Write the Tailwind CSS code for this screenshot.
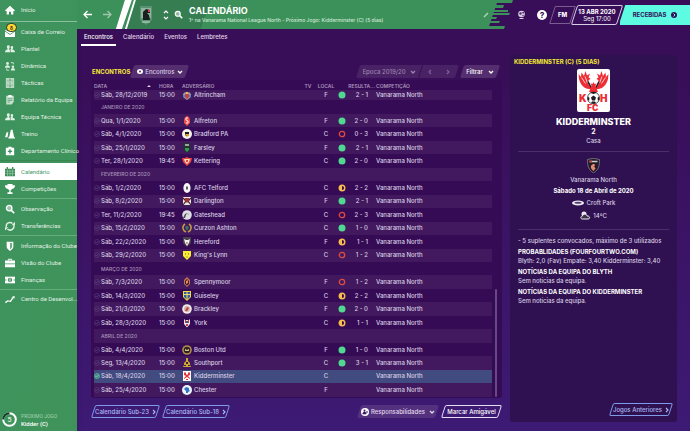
<!DOCTYPE html>
<html lang="pt">
	<head>
		<meta charset="UTF-8" />
		<meta name="viewport" content="width=device-width, initial-scale=1.0" />
		<title>Calendário</title>
		<script src="https://cdn.jsdelivr.net/npm/@tailwindcss/browser@4"></script>
	</head>
	<body class="font-[Inter,'Liberation_Sans',sans-serif] text-[6px] leading-[8px] font-medium text-[#d9cfe3]">
		<!-- Shared shapes -->
		<svg class="hidden">
			<symbol id="chevron-down" viewBox="0 0 6 4"><path d="M1 1l2 2 2-2" fill="none" stroke="currentColor" stroke-width="1.3" /></symbol>
			<symbol id="chevron-right" viewBox="0 0 4 6"><path d="M1 1l2 2-2 2" fill="none" stroke="currentColor" stroke-width="1.1" /></symbol>
			<symbol id="chevron-left" viewBox="0 0 4 6"><path d="M3 1L1 3l2 2" fill="none" stroke="currentColor" stroke-width="1.1" /></symbol>
			<symbol id="search" viewBox="0 0 12 12"><circle cx="5" cy="5" r="3.3" fill="currentColor" fill-opacity=".45" stroke="currentColor" stroke-width="1.6" /><path d="M7.5 7.5L11 11" stroke="currentColor" stroke-width="2" /></symbol>
			<symbol id="people" viewBox="0 0 12 12"><path d="M0 10c0-2 1-3 3-3.4V5.5C1.6 4 2 1.5 4 1.5S6.4 4 5 5.5v1c1 .3 1.5.9 1.7 3.5zM7.3 10c0-1.5-.3-2.5-1.1-3.3L7.5 6C6.3 4.3 6.5 2.5 8.3 2.5s2 2 .9 3.5v.8C11 7.2 12 8 12 10z" fill="currentColor" /></symbol>
			<symbol id="won" viewBox="0 0 8 8"><circle cx="4" cy="4" r="3.5" fill="#50d890" /></symbol>
			<symbol id="lost" viewBox="0 0 8 8"><circle cx="4" cy="4" r="2.7" fill="none" stroke="#dc4b3e" stroke-width="1.3" /></symbol>
			<symbol id="drawn" viewBox="0 0 8 8"><circle cx="4" cy="4" r="2.8" fill="#35103f" stroke="#f8bd4f" stroke-width="1.4" /><path d="M4 1a3 3 0 0 0 0 6z" fill="#f8bd4f" /></symbol>

			<!-- Club crests -->
			<symbol id="altrincham" viewBox="0 0 10 10"><path d="M1 4l2-2 2 1 2-1 2 2v3L5 10 1 7z" fill="#9b9aa9" /><path d="M3 4h4v3L5 9 3 7z" fill="#c34342" /><path d="M1 5h2v2H1zM7 5h2v2H7z" fill="#557fcf" /><path d="M4 2h2v2H4z" fill="#e5bb58" /></symbol>
			<symbol id="alfreton" viewBox="0 0 10 10"><path d="M3 1l2-1 2 1 1 3v3L5 10 2 7V4z" fill="#ee4d49" /><path d="M6 2H4v2l2 1v2H4" fill="none" stroke="#fff" stroke-width=".9" /></symbol>
			<symbol id="bradford" viewBox="0 0 10 10"><circle cx="5" cy="5" r="5" fill="#f6f2ea" /><path d="M3 3h4v3L5 7.5 3 6z" fill="#1d1b23" /><path d="M3 5h4v1L5 7.5z" fill="#e4a42f" /></symbol>
			<symbol id="farsley" viewBox="0 0 10 10"><path d="M2 0h6v2l1 1-1 4-3 3-3-3-1-4 1-1z" fill="#22342c" /><path d="M3 1h4v2H3z" fill="#9ba5a3" /><path d="M3 5h4v2L5 9 3 7z" fill="#2d9b53" /></symbol>
			<symbol id="kettering" viewBox="0 0 10 10"><path d="M0 2l3 0 2-1 2 1 3 0-1 4-1 1-3 3-3-3-1-1z" fill="#e94445" /><path d="M2 3h6L7 6 5 8 3 6z" fill="#f6d9b3" /><path d="M4 4h2v2H4z" fill="#e94445" /></symbol>
			<symbol id="telford" viewBox="0 0 10 10"><ellipse cx="5" cy="5" rx="3.6" ry="5" fill="#f4f3f5" /><path d="M5 3l.8 1v2L5 7l-.8-1V4z" fill="#383440" /></symbol>
			<symbol id="darlington" viewBox="0 0 10 10"><path d="M1 1h8v8H1z" fill="#eee3df" /><path d="M1 2l3 3-3 4M9 2L6 5l3 4" fill="none" stroke="#2c2228" stroke-width="1.2" /><path d="M3 2h4v3L5 7 3 5z" fill="#a4323a" /></symbol>
			<symbol id="gateshead" viewBox="0 0 10 10"><circle cx="5" cy="5" r="4.8" fill="#dedde3" /><path d="M1 8l2-4 2-1-1 2-1 3z" fill="#4d4958" /><path d="M5 3l2 1-1 1z" fill="#8d8999" /></symbol>
			<symbol id="curzon" viewBox="0 0 10 10"><path d="M3 1C0 3 0 7 4 9M7 1c3 2 3 6-1 8" fill="none" stroke="#c59d43" stroke-width="1.6" /><path d="M3.5 3h3v3L5 7.5 3.5 6z" fill="#3c6f69" /></symbol>
			<symbol id="hereford" viewBox="0 0 10 10"><path d="M1 0h8v6L5 10 1 6z" fill="#46434c" /><path d="M2 2l2 1h2l2-1-1 4-2 3-2-3z" fill="#f4eeee" /><path d="M4 5h2v2H4z" fill="#c99a9b" /></symbol>
			<symbol id="kingslynn" viewBox="0 0 10 10"><path d="M1 1h8v5L5 10 1 6z" fill="#f8ee2f" /><path d="M3 3h1v2H3zM6 3h1v2H6zM4.5 6h1v2h-1z" fill="#aaa03b" /></symbol>
			<symbol id="spennymoor" viewBox="0 0 10 10"><path d="M5 0l3 3v4l-3 3-3-3V3z" fill="#c96f5a" /><path d="M5 2l2 2v3L5 8.5 3 7V4z" fill="#36222b" /><path d="M4 4l2-1v3L4 7z" fill="#e58d65" /></symbol>
			<symbol id="guiseley" viewBox="0 0 10 10"><path d="M1 0h8v6L5 10 1 6z" fill="#f3dc3e" /><path d="M2 1h6v5L5 8.5 2 6z" fill="#2e5b99" /><path d="M4.5 1h1v7h-1zM2 3h6v1H2z" fill="#e9e469" /></symbol>
			<symbol id="brackley" viewBox="0 0 10 10"><circle cx="5" cy="5" r="4.8" fill="#f1e9e8" /><circle cx="5" cy="5" r="3" fill="#d8b0ad" /><path d="M3 7l2-4 2 1-2 3z" fill="#b54546" /></symbol>
			<symbol id="york" viewBox="0 0 10 10"><path d="M2 1l1 1h4l1-1v5L5 9.5 2 6z" fill="#e6e4ee" /><path d="M3 2h1v3H3zM6 2h1v3H6zM4 6h2v2H4z" fill="#c83c4a" /><path d="M4 3h2v2H4z" fill="#4c5077" /></symbol>
			<symbol id="boston" viewBox="0 0 10 10"><circle cx="5" cy="5" r="4.8" fill="#b58d4a" /><circle cx="5" cy="5" r="3.2" fill="#2b2423" /><path d="M3 4l2 1 2-1v2H3z" fill="#d9c28e" /></symbol>
			<symbol id="southport" viewBox="0 0 10 10"><path d="M4 0h2v3l2 2v2l1 2H1l1-2V5l2-2z" fill="#d0a73a" /><path d="M4 4h2v2H4zM2 7h2v1H2zM6 7h2v1H6z" fill="#3c262b" /></symbol>
			<symbol id="chester" viewBox="0 0 10 10"><circle cx="5" cy="5" r="5" fill="#eef3fb" /><path d="M2 4l2-2 3 1v2l1 1-2 1v1H4V6z" fill="#2f73c4" /></symbol>
			<symbol id="kidderminster" viewBox="0 0 66 86">
				<rect width="66" height="86" rx="4" fill="#fff" />
				<path d="M29 39C19 43 8 35 4 20L3 10l5 6 1-9 5 7 3-10 3 9 6-4-3 8 4 2-4 4c-1 6 1 11 6 16zM37 39c10 4 21-4 25-19l1-10-5 6-1-9-5 7-3-10-3 9-6-4 3 8-4 2 4 4c1 6-1 11-6 16z" fill="#ee2d35" />
				<path d="M9 17l8 12M16 15l5 13M57 17l-8 12M50 15l-5 13" stroke="#fff" stroke-width="1.5" />
				<path d="M22 25l7 14M44 25l-7 14" stroke="#211c20" stroke-width="3" />
				<path d="M24 46l5-13-2-4 4 1 2-4 2 4 4-1-2 4 5 13-9 1z" fill="#ee2d35" />
				<circle cx="33" cy="58" r="12" fill="#fff" stroke="#211c20" stroke-width="1.5" />
				<path d="M33 53l5 4-2 6h-6l-2-6zM27 48l6 2 6-2-2-2h-8zM22 55l3 3-1 6-3-3zM44 55l-3 3 1 6 3-3zM28 68l2-3h6l2 3-5 2z" fill="#211c20" />
				<text x="4" y="66" font-size="20" font-weight="900" fill="#ee2d35">K</text>
				<text x="46" y="66" font-size="20" font-weight="900" fill="#ee2d35">H</text>
				<text x="20" y="83" font-size="17" font-weight="900" fill="#ee2d35">FC</text>
			</symbol>
			<symbol id="kidderminster-small" viewBox="0 0 10 10"><path d="M1 0h8v10H1z" fill="#fff" /><path d="M2 1l1 1 1-1v2l1 1 1-1V1l1 1 1-1v3L6 5l2 2v1L5 6 2 8V7l2-2-2-1zM4 8h2v1H4z" fill="#e2353b" /></symbol>
		</svg>

		<div class="flex min-h-screen bg-linear-to-b from-[#390e59] from-20% to-[#3d1a74]">
			<!-- Sidebar -->
			<nav class="flex w-[77px] shrink-0 flex-col bg-linear-to-br from-[#3e935e] to-[#3f935a] font-[Roboto,'Liberation_Sans',sans-serif] font-normal text-[#e0efe3] shadow-md">
				<div class="border-b border-white/40 pb-px">
					<a href="#" class="flex h-[20px] items-center gap-[6px] pl-[5px]">
						<svg class="size-[10px]" viewBox="0 0 12 12"><path d="M6 1L0 6.5l1.2 1L2 7v4.5h2.8V8h2.4v3.5H10V7l.8.5 1.2-1z" fill="#fff" /></svg>Início
					</a>
				</div>
				<div class="border-b border-[#39854f] pt-px pb-px">
					<a href="#" class="relative flex h-[17px] items-center gap-[6px] pl-[5px]">
						<svg class="size-[10px]" viewBox="0 0 12 12"><path d="M0 4h12v8H0z" fill="#fff" /><path d="M0 5l6 4 6-4" fill="none" stroke="#3e935e" /></svg>Caixa de Correio
						<span class="absolute top-0 left-[6px] flex h-[9px] w-[11px] items-center justify-center rounded-full border border-[#1c3b27] bg-[#fcd53b] text-[5px] font-bold text-[#3b2d12]">8</span>
					</a>
					<a href="#" class="flex h-[17px] items-center gap-[6px] pl-[5px]"><svg class="size-[10px]"><use href="#people" /></svg>Plantel</a>
					<a href="#" class="flex h-[17px] items-center gap-[6px] pl-[5px]">
						<svg class="size-[10px]" viewBox="0 0 12 12"><circle cx="3" cy="3" r="1.7" fill="currentColor" /><path d="M0 8c0-2 1-3 3-3s3 1 3 3z" fill="currentColor" /><circle cx="9.5" cy="7" r="1.5" fill="currentColor" /><path d="M7 11.5c0-2 1-3 2.5-3s2.5 1 2.5 3z" fill="currentColor" /><path d="M7 2h3v2M2 9v2h3" fill="none" stroke="currentColor" /></svg>Dinâmica
					</a>
					<a href="#" class="flex h-[17px] items-center gap-[6px] pl-[5px]">
						<svg class="size-[10px]" viewBox="0 0 12 12"><path d="M1 0h10v12H1z" fill="currentColor" fill-opacity=".75" /><path d="M3 3h1v1H3zM8 3h1v1H8zM5.5 5.5h1v1h-1zM3 8h1v1H3zM8 8h1v1H8z" fill="#3e7d52" /><path d="M6 1v3M6 8v3" stroke="#3e7d52" /></svg>Tácticas
					</a>
					<a href="#" class="flex h-[17px] items-center gap-[6px] pl-[5px]">
						<svg class="size-[10px]" viewBox="0 0 12 12"><path d="M1.5 1h9v7L8 11.5H1.5z" fill="currentColor" fill-opacity=".85" /><path d="M4 0h4v2.5H4z" fill="#fff" /><path d="M3 4.5h6M3 6.5h6M3 8.5h3" stroke="#3e935e" stroke-width=".8" /></svg>Relatório da Equipa
					</a>
					<a href="#" class="flex h-[17px] items-center gap-[6px] pl-[5px]"><svg class="size-[10px]"><use href="#people" /></svg>Equipa Técnica</a>
					<a href="#" class="flex h-[17px] items-center gap-[6px] pl-[5px]">
						<svg class="size-[10px]" viewBox="0 0 12 12"><path d="M7 1h2l2 9h1v1.5H4V10h1zM2 4h2l-1 6H0z" fill="#fff" /></svg>Treino
					</a>
					<a href="#" class="flex h-[17px] items-center gap-[6px] pl-[5px] whitespace-nowrap">
						<svg class="size-[10px] shrink-0" viewBox="0 0 12 12"><path d="M4 1h4v1h3v9H1V2h3z" fill="#fff" /><path d="M6 4v5M3.5 6.5h5" stroke="#3e935e" stroke-width="1.6" /></svg>Departamento Clínico
					</a>
				</div>
				<div class="border-b border-[#66ac7c] pt-[2px] pb-px">
					<a href="#" aria-current="page" class="flex h-[17px] items-center gap-[6px] bg-white pl-[5px] text-[#49996a]">
						<svg class="size-[10px]" viewBox="0 0 12 12"><path d="M0 2h12v9H0zM2 0h1.5v3H2zM8.5 0H10v3H8.5z" fill="#3b8c55" /><path d="M0 5h12M0 8h12M3 3v8M6 3v8M9 3v8" stroke="#a9d0b5" stroke-width=".7" /></svg>Calendário
					</a>
					<a href="#" class="flex h-[17px] items-center gap-[6px] pl-[5px]">
						<svg class="size-[10px]" viewBox="0 0 12 12"><path d="M3 0h6v1.5h3C12 4 11 5.5 8.5 6L6.8 7.5V10H9v2H3v-2h2.2V7.5L3.5 6C1 5.5 0 4 0 1.5h3z" fill="#fff" /></svg>Competições
					</a>
				</div>
				<div class="border-b border-[#66ac7c] py-px">
					<a href="#" class="flex h-[17px] items-center gap-[6px] pl-[5px]"><svg class="size-[10px] text-white"><use href="#search" /></svg>Observação</a>
					<a href="#" class="flex h-[17px] items-center gap-[6px] pl-[5px]">
						<svg class="size-[10px]" viewBox="0 0 12 12"><path d="M1.5 7A4.5 4.5 0 0 1 9 3M10.5 5A4.5 4.5 0 0 1 3 9.5" fill="none" stroke="currentColor" stroke-width="1.8" /><path d="M8 5h4V1zM4 7.5H0v4z" fill="currentColor" /></svg>Transferências
					</a>
				</div>
				<div class="border-b border-[#66ac7c] py-px">
					<a href="#" class="flex h-[17px] items-center gap-[6px] pl-[5px] whitespace-nowrap">
						<svg class="size-[10px] shrink-0" viewBox="0 0 12 12"><path d="M2 1h8v6c0 2-2 3.5-4 5-2-1.5-4-3-4-5z" fill="#fff" /><path d="M6 2.5v7.5c1.5-1 2.5-2 2.5-3V2.5z" fill="#6fae82" /></svg>Informação do Clube
					</a>
					<a href="#" class="flex h-[17px] items-center gap-[6px] pl-[5px]">
						<svg class="size-[10px]" viewBox="0 0 12 12"><path d="M4 3V1.5h4V3" fill="none" stroke="#fff" stroke-width="1.2" /><path d="M0 3h12v3.5H0zM0 7.5h12V11H0z" fill="#fff" /></svg>Visão do Clube
					</a>
					<a href="#" class="flex h-[17px] items-center gap-[6px] pl-[5px]">
						<svg class="size-[10px]" viewBox="0 0 12 12"><path d="M0 2h12v8H0z" fill="#fff" /><circle cx="6" cy="6" r="2.6" fill="#3e935e" /><path d="M6 4v4" stroke="#fff" /><path d="M1 5v2M11 5v2" stroke="#3e935e" /></svg>Finanças
					</a>
				</div>
				<a href="#" class="flex h-[17px] items-center gap-[6px] pl-[5px] whitespace-nowrap">
					<svg class="size-[10px] shrink-0" viewBox="0 0 12 12"><path d="M0 9.5l3-2 3 .5 3-4H7.5L11.5 2v3.5L10 5 7 9.5l-3.5-.5L1 11z" fill="#fff" /></svg>Centro de Desenvol...
				</a>
				<div class="mt-auto flex items-center gap-[4px] pb-[4px] pl-[2px]">
					<svg class="size-[15px]" viewBox="0 0 15 15">
						<circle cx="7.5" cy="7.5" r="6.3" fill="none" stroke="#fff" stroke-width="2" />
						<path d="M1.2 7.5A6.3 6.3 0 0 1 7.5 1.2" fill="none" stroke="#153c27" stroke-width="2" />
						<text x="7.5" y="10" text-anchor="middle" font-size="7" fill="#fff">5</text>
					</svg>
					<p class="leading-[7px]"><span class="text-[5px] text-[#a5d2b1]">PRÓXIMO JOGO</span><br /><span class="font-medium text-white">Kidder (C)</span></p>
				</div>
			</nav>

			<div class="flex min-w-0 flex-1 flex-col">
				<!-- Header -->
				<header class="flex h-[29px] items-center">
					<div class="relative isolate flex h-full flex-1 items-center">
						<svg class="absolute inset-y-0 left-0 -z-10 h-full w-full overflow-visible" preserveAspectRatio="none" viewBox="0 0 429 29">
							<path d="M0 0h422l-10 29H0z" fill="#3c9059" />
							<path d="M415 0h22l-1 3h-21zM415 5h13l-1 3h-12zM410 10h22v2h-22zM410 13h24l-1 2h-23zM405 17h16l-1 2h-15zM405 21h19l-1 2h-18zM400 26h29l-1 3h-28z" fill="#3c9059" />
							<path d="M58 0h76l-10 29H47z" fill="#367e52" />
							<path d="M48 0h7L45 29h-6zM57 0h2L50 29h-2z" fill="#fff" />
						</svg>
						<div class="flex items-center gap-[11px] pl-[6px] text-white">
							<button aria-label="Voltar"><svg class="size-[9px]" viewBox="0 0 9 9"><path d="M9 4.5H1M4.5 1L1 4.5 4.5 8" fill="none" stroke="currentColor" stroke-width="1.3" /></svg></button>
							<button aria-label="Avançar" class="opacity-50"><svg class="size-[9px]" viewBox="0 0 9 9"><path d="M0 4.5h8M4.5 1L8 4.5 4.5 8" fill="none" stroke="currentColor" stroke-width="1.3" /></svg></button>
						</div>
						<svg class="ml-[27px] h-[20px] w-[14px]" viewBox="0 0 14 20">
							<path d="M1 1h12v14l-6 5-6-5z" fill="#5a9373" />
							<path d="M2 3h10v10H2z" fill="#8fb59f" />
							<path d="M4 13V7l3-3 4 1v3H8l2 2 1 5H4z" fill="#17201e" />
							<path d="M9 4l2 1v2H9z" fill="#c5474a" />
							<path d="M3 17h8" stroke="#c6ddcf" />
						</svg>
						<svg class="ml-[10px] h-[10px] w-[6px] text-white" viewBox="0 0 6 10"><path d="M1 3l2-2 2 2M1 7l2 2 2-2" fill="none" stroke="currentColor" stroke-width="1.2" /></svg>
						<button aria-label="Procurar" class="ml-[5px]"><svg class="size-[9px] text-white"><use href="#search" /></svg></button>
						<div class="ml-[6px] flex-1 whitespace-nowrap">
							<h1 class="text-[9px] leading-[10px] font-bold text-white">CALENDÁRIO</h1>
							<p class="text-[5px] text-[#d2e9d8]">1º na Vanarama National League North - Próximo Jogo: Kidderminster (C) (5 dias)</p>
						</div>
						<button aria-label="Editar" class="mr-[16px]"><svg class="size-[6px]" viewBox="0 0 6 6"><path d="M1 5l4-4" stroke="#a9d7b5" stroke-width="1.5" /></svg></button>
					</div>
					<button aria-label="Mundo" class="ml-[12px]">
						<svg class="size-[9px]" viewBox="0 0 9 9"><circle cx="4.5" cy="4" r="3.3" fill="#d8cce3" /><path d="M2 3l2-1 1 2-2 1zM5 2h2v1L6 4zM5 5h2L6 6.5z" fill="#54316f" /><path d="M2.5 8.5h4" stroke="#d8cce3" /></svg>
					</button>
					<button aria-label="Ajuda" class="ml-[11px] flex size-[10px] items-center justify-center rounded-full bg-white text-[8px] font-extrabold text-[#390e59]">?</button>
					<button class="relative ml-[5px] h-[18px] w-[21px] text-[6px] font-extrabold text-white before:absolute before:inset-0 before:-skew-x-[18deg] before:rounded-[1px] before:border before:border-[#795c91]">FM</button>
					<div class="relative isolate ml-px flex h-[20px] w-[46px] flex-col items-center justify-center text-white before:absolute before:inset-0 before:-z-10 before:-skew-x-[18deg] before:rounded-[2px] before:border before:border-[#d8cde2]">
						<strong class="leading-[7px] font-bold whitespace-nowrap">13 ABR 2020</strong>
						<span class="leading-[7px] font-normal">Seg 17:00</span>
					</div>
					<button class="relative isolate flex h-[20px] w-[70px] items-center justify-center gap-[5px] overflow-hidden font-bold text-[#34105a] before:absolute before:inset-y-0 before:left-[2px] before:-right-[10px] before:-z-10 before:-skew-x-[18deg] before:bg-[#5cfbe2]">
						RECEBIDAS
						<svg class="size-[6px]" viewBox="0 0 6 6"><circle cx="3" cy="3" r="3" fill="currentColor" /><path d="M2.5 1.5L4 3 2.5 4.5" fill="none" stroke="#5cfbe2" /></svg>
					</button>
				</header>

				<!-- Tabs -->
				<nav class="flex h-[17px] items-stretch gap-[4px] pl-[4px] text-[#e2d9ea]">
					<a href="#" aria-current="page" class="border-b-2 border-white px-[3px] pt-[4px] text-white">Encontros</a>
					<a href="#" class="px-[3px] pt-[4px]">Calendário</a>
					<a href="#" class="px-[3px] pt-[4px]">Eventos</a>
					<a href="#" class="px-[3px] pt-[4px]">Lembretes</a>
				</nav>

				<div class="flex flex-1 gap-[8px] pr-[13px] pb-[9px] pl-[14px]">
					<!-- Fixtures -->
					<main class="flex min-w-0 flex-1 flex-col pt-[19px] pb-[4px]">
						<div class="flex h-[13px] items-center pr-[4px]">
							<h2 class="ml-px font-bold text-[#f6ec37]">ENCONTROS</h2>
							<label class="relative isolate ml-[2px] flex h-[13px] w-[55px] items-center gap-[2px] px-[5px] before:absolute before:inset-0 before:-z-10 before:-skew-x-[18deg] before:rounded-[2px] before:bg-[#552e70]">
								<svg class="h-[5px] w-[6px] shrink-0" viewBox="0 0 6 5"><ellipse cx="3" cy="2.5" rx="3" ry="2.5" fill="#fff" /><circle cx="3" cy="2.5" r="1" fill="#552e70" /></svg>
								<select aria-label="Vista" class="shrink-0 appearance-none leading-[8px]"><option>Encontros</option></select>
								<svg class="h-[4px] w-[6px] shrink-0 text-white"><use href="#chevron-down" /></svg>
							</label>
							<label class="relative isolate ml-auto flex h-[13px] w-[62px] items-center justify-center gap-[3px] text-[#9c84ac] before:absolute before:inset-0 before:-z-10 before:-skew-x-[18deg] before:rounded-l-[2px] before:bg-[#482265]">
								<select aria-label="Época" class="shrink-0 appearance-none leading-[8px]"><option>Época 2019/20</option></select>
								<svg class="h-[4px] w-[6px] shrink-0"><use href="#chevron-down" /></svg>
							</label>
							<div class="relative isolate ml-px flex h-[13px] w-[36px] items-center justify-around text-[#80649a] before:absolute before:inset-0 before:-z-10 before:-skew-x-[18deg] before:rounded-r-[2px] before:bg-[#482265]">
								<button aria-label="Época anterior" class="p-px"><svg class="h-[6px] w-[4px]"><use href="#chevron-left" /></svg></button>
								<button aria-label="Época seguinte" class="p-px"><svg class="h-[6px] w-[4px]"><use href="#chevron-right" /></svg></button>
							</div>
							<button aria-haspopup="menu" class="relative isolate ml-[5px] flex h-[13px] w-[36px] items-center justify-center gap-[5px] text-white before:absolute before:inset-0 before:-z-10 before:-skew-x-[18deg] before:rounded-[2px] before:bg-[#552e70]">
								Filtrar<svg class="h-[4px] w-[6px]"><use href="#chevron-down" /></svg>
							</button>
						</div>

						<div class="mt-[2px] flex flex-1 gap-[3px] rounded-[3px] bg-[#360b55] pt-px pr-[5px] pb-px pl-[3px]">
							<table class="h-full flex-1 table-fixed border-collapse whitespace-nowrap">
								<colgroup>
									<col class="w-[7px]" />
									<col class="w-[58px]" />
									<col class="w-[23px]" />
									<col />
									<col class="w-[14px]" />
									<col class="w-[22px]" />
									<col class="w-[10px]" />
									<col class="w-[28px]" />
									<col class="w-[117px]" />
								</colgroup>
								<thead class="text-left text-[5px] text-[#a994b9]">
									<tr class="h-[9px]">
										<th colspan="2" class="p-0 font-semibold"><span class="flex items-center justify-between pr-[8px]">DATA<svg class="h-[2px] w-[4px]" viewBox="0 0 4 2"><path d="M0 2l2-2 2 2z" fill="#d9cfe3" /></svg></span></th>
										<th class="p-0 font-semibold">HORA</th>
										<th class="p-0 font-semibold">ADVERSÁRIO</th>
										<th class="p-0 text-center font-semibold">TV</th>
										<th class="p-0 text-center font-semibold">LOCAL</th>
										<th class="p-0"></th>
										<th class="p-0 text-right font-semibold">RESULTA...</th>
										<th class="p-0 pl-px font-semibold">COMPETIÇÃO</th>
									</tr>
								</thead>
								<tbody id="fixtures"></tbody>
							</table>
							<div class="flex w-[2px] items-end"><div class="h-[108px] w-full rounded-full bg-[#664a83]"></div></div>
						</div>

						<div class="mt-[7px] flex h-[13px] items-center text-[#a9bdf5]">
							<button class="relative isolate ml-[2px] flex h-[13px] w-[65px] items-center justify-center gap-[3px] whitespace-nowrap before:absolute before:inset-0 before:-z-10 before:-skew-x-[18deg] before:rounded-[2px] before:border before:border-[#7d9be8]">
								Calendário Sub-23<svg class="h-[6px] w-[4px]"><use href="#chevron-right" /></svg>
							</button>
							<button class="relative isolate ml-[6px] flex h-[13px] w-[64px] items-center justify-center gap-[3px] whitespace-nowrap before:absolute before:inset-0 before:-z-10 before:-skew-x-[18deg] before:rounded-[2px] before:border before:border-[#7d9be8]">
								Calendário Sub-18<svg class="h-[6px] w-[4px]"><use href="#chevron-right" /></svg>
							</button>
							<button aria-haspopup="menu" class="relative isolate ml-auto flex h-[13px] w-[78px] items-center justify-center gap-[2px] text-[#e2d9ea] before:absolute before:inset-0 before:-z-10 before:-skew-x-[18deg] before:rounded-[2px] before:bg-[#54317f]">
								<svg class="size-[8px]" viewBox="0 0 8 8"><circle cx="4" cy="4" r="4" fill="#fff" /><circle cx="3.5" cy="2.5" r="1" fill="#3a1760" /><path d="M1.8 6c0-3 3.4-3 3.4 0zM5 4h2M6 3v2" fill="#3a1760" stroke="#3a1760" stroke-width=".6" /></svg>
								Responsabilidades<svg class="ml-[2px] h-[4px] w-[6px]"><use href="#chevron-down" /></svg>
							</button>
							<button class="relative isolate mr-[2px] ml-[6px] flex h-[13px] w-[57px] items-center justify-center whitespace-nowrap text-white before:absolute before:inset-0 before:-z-10 before:-skew-x-[18deg] before:rounded-[2px] before:border before:border-[#e6def0]">Marcar Amigável</button>
						</div>
					</main>

					<!-- Next match -->
					<aside class="mt-[9px] flex w-[167px] shrink-0 flex-col rounded-[3px] bg-[#2f1050] px-[4px] pt-[3px] pb-[6px]">
						<h2 class="font-bold text-[#f6ec37]">KIDDERMINSTER (C) (5 DIAS)</h2>
						<div class="mx-[4px] flex flex-col items-center border-b border-[#4c2f69] pb-[6px]">
							<svg class="mt-[3px] h-[43px] w-[33px]"><use href="#kidderminster" /></svg>
							<p class="mt-[4px] text-[9px] leading-[11px] font-extrabold text-white">KIDDERMINSTER</p>
							<p class="text-[7px] leading-[9px] font-bold text-white">2</p>
							<p class="leading-[9px]">Casa</p>
						</div>
						<div class="mx-[4px] flex flex-col items-center border-b border-[#4c2f69] pt-[6px] pb-[9px]">
							<svg class="h-[15px] w-[13px]" viewBox="0 0 26 30">
								<path d="M1 3q12-5 24 0c0 12-1 20-12 27C2 23 1 15 1 3z" fill="#201b24" stroke="#8f8598" stroke-width="1.5" />
								<path d="M5 7h16" stroke="#d2cbd0" stroke-width="3" />
								<path d="M5 7h5" stroke="#d63f44" stroke-width="3" />
								<path d="M9 22c-3-5 0-10 5-10l3 2-3 2 3 5-4 5z" fill="#e28b70" />
							</svg>
							<p class="mt-[2px] leading-[9px]">Vanarama North</p>
							<p class="mt-[2px] leading-[9px] font-bold text-white">Sábado 18 de Abril de 2020</p>
							<p class="mt-[3px] flex items-center gap-[3px] leading-[9px]">
								<svg class="h-[6px] w-[12px]" viewBox="0 0 12 6"><ellipse cx="6" cy="3" rx="6" ry="2.6" fill="#eee8f3" /><ellipse cx="6" cy="2.7" rx="3.5" ry="1" fill="#53406b" /></svg>Croft Park
							</p>
							<p class="mt-[4px] flex items-center gap-[2px] leading-[9px]">
								<svg class="h-[9px] w-[11px]" viewBox="0 0 22 18"><circle cx="8" cy="6" r="5" fill="#eee8f3" /><path d="M5 16c-5 0-4-6 0-6 1-5 8-5 9 0 6-1 7 6 2 6z" fill="#3c3347" stroke="#eee8f3" stroke-width="2" /></svg>14ºC
							</p>
						</div>
						<div class="mx-[4px] pt-[6px] leading-[9px] whitespace-nowrap">
							<p>- 5 suplentes convocados, máximo de 3 utilizados</p>
							<h3 class="mt-[2px] font-bold text-white">PROBABLIDADES (FOURFOURTWO.COM)</h3>
							<p>Blyth: 2,0 (Fav) Empate: 3,40 Kidderminster: 3,40</p>
							<h3 class="mt-[2px] font-bold text-white">NOTÍCIAS DA EQUIPA DO BLYTH</h3>
							<p>Sem notícias da equipa.</p>
							<h3 class="mt-[2px] font-bold text-white">NOTÍCIAS DA EQUIPA DO KIDDERMINSTER</h3>
							<p>Sem notícias da equipa.</p>
						</div>
						<button class="relative isolate mt-auto mr-[2px] flex h-[13px] w-[60px] items-center justify-center gap-[3px] self-end whitespace-nowrap text-[#a9bdf5] before:absolute before:inset-0 before:-z-10 before:-skew-x-[18deg] before:rounded-[2px] before:border before:border-[#7d9be8]">
							Jogos Anteriores<svg class="h-[6px] w-[4px]"><use href="#chevron-right" /></svg>
						</button>
					</aside>
				</div>
			</div>
		</div>

		<script>
			// A plain string is a month heading, the rest: date, time, crest, opponent, venue, outcome, score
			const rows = [
				["Sáb, 28/12/2019", "15:00", "altrincham", "Altrincham", "F", "won", "2 - 1"],
				"JANEIRO DE 2020",
				["Qua, 1/1/2020", "15:00", "alfreton", "Alfreton", "F", "won", "2 - 0"],
				["Sáb, 4/1/2020", "15:00", "bradford", "Bradford PA", "C", "lost", "0 - 3"],
				["Sáb, 25/1/2020", "15:00", "farsley", "Farsley", "F", "won", "2 - 1"],
				["Ter, 28/1/2020", "19:45", "kettering", "Kettering", "C", "won", "2 - 0"],
				"FEVEREIRO DE 2020",
				["Sáb, 1/2/2020", "15:00", "telford", "AFC Telford", "C", "drawn", "2 - 2"],
				["Sáb, 8/2/2020", "15:00", "darlington", "Darlington", "F", "won", "2 - 1"],
				["Ter, 11/2/2020", "19:45", "gateshead", "Gateshead", "C", "lost", "2 - 3"],
				["Sáb, 15/2/2020", "15:00", "curzon", "Curzon Ashton", "C", "won", "1 - 0"],
				["Sáb, 22/2/2020", "15:00", "hereford", "Hereford", "F", "drawn", "1 - 1"],
				["Sáb, 29/2/2020", "15:00", "kingslynn", "King's Lynn", "C", "lost", "1 - 2"],
				"MARÇO DE 2020",
				["Sáb, 7/3/2020", "15:00", "spennymoor", "Spennymoor", "F", "lost", "1 - 2"],
				["Sáb, 14/3/2020", "15:00", "guiseley", "Guiseley", "C", "drawn", "2 - 2"],
				["Sáb, 21/3/2020", "15:00", "brackley", "Brackley", "F", "won", "2 - 0"],
				["Sáb, 28/3/2020", "15:00", "york", "York", "C", "drawn", "1 - 1"],
				"ABRIL DE 2020",
				["Sáb, 4/4/2020", "15:00", "boston", "Boston Utd", "F", "won", "1 - 0"],
				["Seg, 13/4/2020", "15:00", "southport", "Southport", "C", "won", "3 - 1"],
				["Sáb, 18/4/2020", "15:00", "kidderminster-small", "Kidderminster", "C", "", ""],
				["Sáb, 25/4/2020", "15:00", "chester", "Chester", "F", "", ""],
			];

			const icon = (id, size) => (id ? `<svg class="${size} block"><use href="#${id}" /></svg>` : "");

			document.getElementById("fixtures").innerHTML = rows
				.map((row, i) => {
					const height = i === 0 ? "h-[10px]" : "h-[13px]";
					if (typeof row === "string") {
						return `<tr class="${height} odd:bg-[#42195f]"><td class="p-0"></td><td colspan="8" class="p-0 text-[5px] text-[#a994b9]">${row}</td></tr>`;
					}
					const [date, time, crest, team, venue, outcome, score] = row;
					const next = team === "Kidderminster";
					const tone = next ? "bg-[#424b80]" : "odd:bg-[#42195f]";
					const check = next ? "text-[#50d890]" : "text-[#5f4078]";
					return `<tr class="${height} ${tone}">
						<td class="p-0"><svg class="size-[6px] ${check}" viewBox="0 0 6 6"><circle cx="3" cy="3" r="2.5" fill="${next ? "#557c90" : "none"}" stroke="currentColor" stroke-width=".6" /><path d="M1.5 3l1 1 2-2" fill="none" stroke="currentColor" /></svg></td>
						<td class="p-0">${date}</td>
						<td class="p-0">${time}</td>
						<td class="p-0"><span class="flex items-center gap-[2px]">${icon(crest, "size-[10px]")}${team}</span></td>
						<td class="p-0"></td>
						<td class="p-0 text-center">${venue}</td>
						<td class="p-0">${icon(outcome, "size-[8px] mx-auto")}</td>
						<td class="p-0 pr-[7px] text-right">${score}</td>
						<td class="p-0 pl-px">Vanarama North</td>
					</tr>`;
				})
				.join("");
		</script>
	</body>
</html>
